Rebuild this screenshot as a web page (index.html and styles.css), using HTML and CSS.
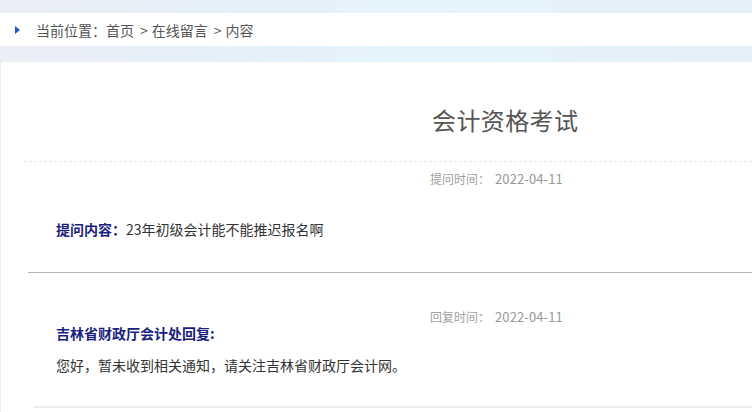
FILE: index.html
```html
<!DOCTYPE html>
<html lang="zh-CN">
<head>
<meta charset="utf-8">
<title>会计资格考试</title>
<link rel="stylesheet" href="styles.css">
</head>
<body>
<div class="page">
  <div class="band band-top"></div>
  <div class="crumb">
    <span class="crumb-arrow"></span>
    <span class="crumb-text">当前位置：首页<span class="sep">&gt;</span>在线留言<span class="sep">&gt;</span>内容</span>
  </div>
  <div class="band band-mid"></div>
  <div class="main">
    <div class="title">会计资格考试</div>
    <div class="qa question">
      <div class="meta">提问时间：<span class="date">2022-04-11</span></div>
      <div class="q-line"><span class="label">提问内容：</span>23年初级会计能不能推迟报名啊</div>
    </div>
    <div class="qa reply">
      <div class="meta">回复时间：<span class="date">2022-04-11</span></div>
      <div class="reply-name">吉林省财政厅会计处回复:</div>
      <div class="reply-text">您好，暂未收到相关通知，请关注吉林省财政厅会计网。</div>
    </div>
  </div>
</div>
</body>
</html>
```
FILE: styles.css
```css
html, body {
  margin: 0;
  padding: 0;
}
body {
  font-family: "Noto Sans CJK SC", "Liberation Sans", sans-serif;
  background: #ffffff;
  color: #333;
  overflow: hidden;
}
.page {
  width: 752px;
  height: 412px;
  background: linear-gradient(to right, #ebedf4 0%, #e6f1fa 30%, #e4f3fb 60%, #e6f0f8 100%);
}
.band-top {
  height: 13px;
}
.band-mid {
  height: 16px;
}
.crumb {
  height: 33px;
  background: #fff;
  display: flex;
  align-items: center;
  padding-left: 15px;
}
.crumb-arrow {
  width: 0;
  height: 0;
  border-top: 4.5px solid transparent;
  border-bottom: 4.5px solid transparent;
  border-left: 5px solid #1b5cc8;
  margin-right: 16px;
  margin-top: 1px;
}
.crumb-text {
  font-size: 14px;
  color: #555;
  line-height: 20px;
}
.sep {
  display: inline-block;
  margin: 0 4px 0 6px;
}
.main {
  margin-left: 1px;
  background: #fff;
  height: 350px;
  padding-top: 40px;
  box-sizing: border-box;
}
.title {
  margin-left: 23px;
  padding-left: 408px;
  font-size: 24px;
  letter-spacing: 0.4px;
  line-height: 36px;
  color: #555;
  padding-bottom: 23px;
  border-bottom: 1px dashed #e6e6e6;
}
.meta {
  font-size: 12px;
  line-height: 16px;
  color: #a0a0a0;
}
.date {
  font-size: 13px;
  letter-spacing: 0.1px;
  color: #999;
  margin-left: 5px;
}
.label, .reply-name {
  font-weight: bold;
  color: #1a1f7e;
}
.question {
  margin-left: 27px;
  border-bottom: 1px solid #b4b4b4;
  padding-top: 9px;
  padding-bottom: 31px;
}
.question .meta {
  padding-left: 402px;
}
.q-line {
  margin-top: 30px;
  padding-left: 28px;
  font-size: 14px;
  line-height: 24px;
  color: #333;
}
.reply {
  margin-left: 32px;
  border-bottom: 2px solid #eeeeee;
  padding-top: 36px;
  padding-bottom: 29px;
}
.reply .meta {
  padding-left: 397px;
}
.reply-name {
  padding-left: 23px;
  font-size: 14px;
  line-height: 16px;
}
.reply-text {
  margin-top: 12px;
  padding-left: 23px;
  font-size: 14px;
  line-height: 24px;
  color: #333;
}
```
